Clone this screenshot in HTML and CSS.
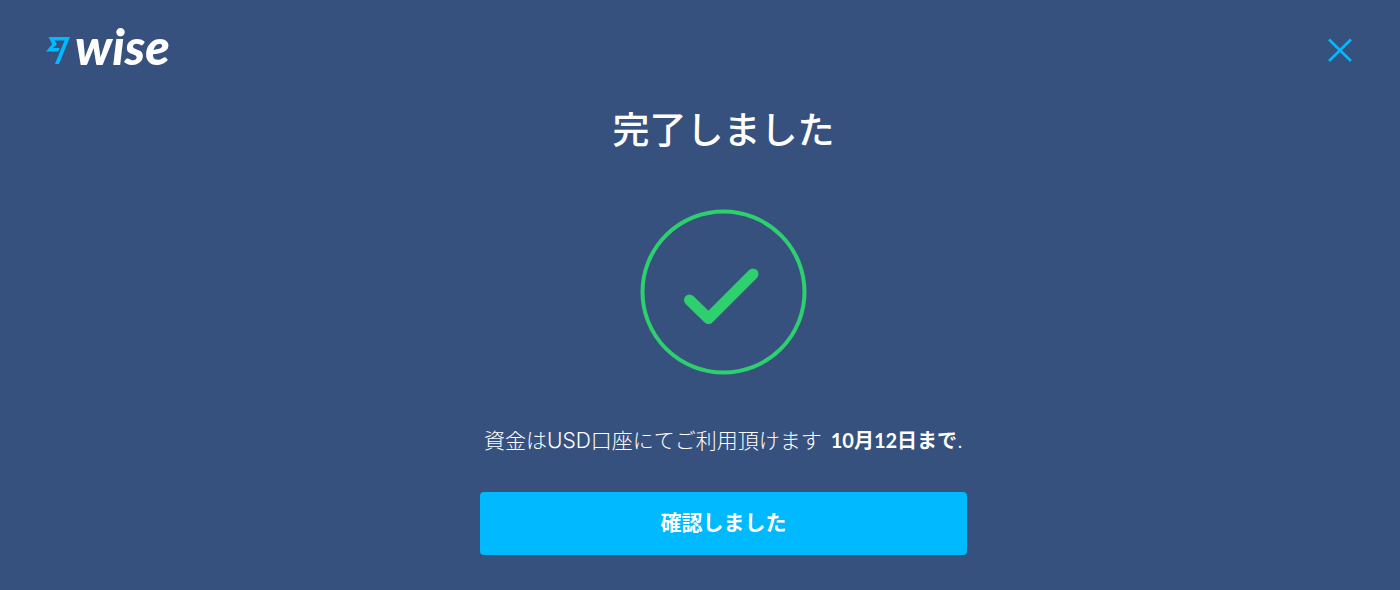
FILE: index.html
```html
<!DOCTYPE html>
<html lang="ja">
<head>
<meta charset="utf-8">
<meta name="viewport" content="width=device-width, initial-scale=1">
<title>Wise</title>
<link rel="stylesheet" href="styles.css">
</head>
<body>
<header class="header">
  <a class="logo" href="#">
    <svg class="logo-flag" viewBox="0 0 24 27" aria-hidden="true">
      <path fill="#00b9ff" fill-rule="evenodd" d="M2.500 0H24L13 27H9L18.600 3.600H8.700L10.900 7.200L7 11H13.800L12.300 14.600H0L6.200 7.200Z"/>
    </svg>
    <span class="logo-name">wise</span>
  </a>
  <button class="close" type="button" aria-label="閉じる">
    <svg viewBox="0 0 24 24" aria-hidden="true">
      <path d="M1 1.500L23 23M23 1.500L1 23" fill="none" stroke="#00b9ff" stroke-width="2.600"/>
    </svg>
  </button>
</header>
<main class="main">
  <h1 class="title">完了しました</h1>
  <svg class="success" viewBox="0 0 166 165" aria-hidden="true">
    <ellipse cx="82.500" cy="82" rx="81" ry="80.500" fill="none" stroke="#2ed06e" stroke-width="4"/>
    <path d="M48.500 90L67.500 108.500L112 64" fill="none" stroke="#2ed06e" stroke-width="11" stroke-linecap="round" stroke-linejoin="round"/>
  </svg>
  <p class="message">資金はUSD口座にてご利用頂けます <strong>10月12日まで</strong>.</p>
  <button class="confirm" type="button">確認しました</button>
</main>
</body>
</html>
```
FILE: styles.css
```css
* {
  box-sizing: border-box;
}

body {
  margin: 0;
  min-height: 100vh;
  background: #37517e;
  color: #fff;
  font-family: Lato, "Noto Sans CJK JP", sans-serif;
}

.header {
  display: flex;
  align-items: center;
  justify-content: space-between;
  height: 100px;
  padding: 0 48px 0 46px;
}

.logo {
  display: flex;
  align-items: center;
  gap: 5px;
  color: #fff;
  text-decoration: none;
}

.logo-flag {
  width: 24px;
  height: 27px;
}

.logo-name {
  padding-bottom: 8px;
  font-size: 50px;
  font-style: italic;
  font-weight: 900;
  line-height: 48px;
}

.close {
  width: 24px;
  height: 24px;
  padding: 0;
  border: 0;
  background: none;
  cursor: pointer;
}

.close svg {
  display: block;
}

.main {
  display: flex;
  flex-direction: column;
  align-items: center;
  padding: 0 0 35px 47px;
}

.title {
  margin: 0;
  font-size: 37px;
  font-weight: 500;
  line-height: 60px;
}

.success {
  width: 166px;
  height: 165px;
  margin-top: 50px;
  overflow: visible;
}

.message {
  margin: 50px 0 0;
  font-family: Inter, "Noto Sans CJK JP", sans-serif;
  font-size: 21px;
  font-weight: 300;
  line-height: 32px;
}

.message strong {
  margin-left: 3px;
  font-family: Lato, "Noto Sans CJK JP", sans-serif;
  font-size: 20px;
  font-weight: 700;
  line-height: 20px;
}

.confirm {
  width: 100%;
  max-width: 487px;
  height: 63px;
  margin-top: 35px;
  padding: 0 0 6px;
  border: 0;
  border-radius: 4px;
  background: #00b9ff;
  color: #fff;
  font: inherit;
  font-size: 21px;
  font-weight: 700;
  cursor: pointer;
}
```
